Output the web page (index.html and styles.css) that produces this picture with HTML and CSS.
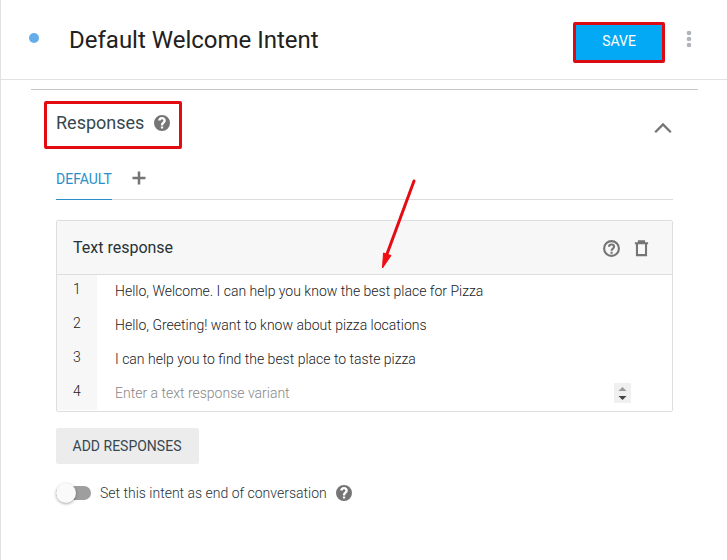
FILE: index.html
```html
<!DOCTYPE html>
<html lang="en">
<head>
<meta charset="utf-8">
<title>Default Welcome Intent</title>
<link rel="stylesheet" href="styles.css">
</head>
<body>
<svg class="symbols" aria-hidden="true">
  <symbol id="help" viewBox="2 2 20 20"><path d="M12 2a10 10 0 1 0 0 20 10 10 0 0 0 0-20zm1.500 17h-2.900v-2.700h2.900zm2.400-7.700-.9.900c-.9.800-1.400 1.400-1.500 2.800h-2.900c0-2 .7-3.100 1.700-4l1.100-1.200c.8-1 .3-2.500-1.400-2.500-1 0-1.600.7-1.600 1.700H7.300c0-2.700 2-4.500 4.700-4.500s4.700 1.700 4.700 4.200c0 1.100-.3 2-.8 2.600z"/></symbol>
</svg>
<div class="page">
  <header class="header">
    <span class="status"></span>
    <h1 class="title">Default Welcome Intent</h1>
    <button class="save">SAVE</button>
    <svg class="more" viewBox="0 0 6 18"><circle cx="3" cy="3" r="2.300"/><circle cx="3" cy="9" r="2.300"/><circle cx="3" cy="15" r="2.300"/></svg>
  </header>
  <main class="content">
    <div class="section-head">
      <div class="section-title"><span>Responses</span><svg class="help"><use href="#help"/></svg></div>
      <svg class="chevron" viewBox="0 0 18 12"><path d="M1.200 10.200 9 2.400l7.800 7.800"/></svg>
    </div>
    <nav class="tabs">
      <a class="tab">DEFAULT</a>
      <svg class="plus" viewBox="0 0 14 14"><path d="M7 .5v13M.5 7h13"/></svg>
    </nav>
    <section class="card">
      <div class="card-head">
        <h2 class="card-title">Text response</h2>
        <svg class="help-outline" viewBox="2 2 20 20"><circle cx="12" cy="12" r="8.700"/><path d="M9.100 10c0-3.700 5.900-3.700 5.900 0 0 2.100-2.900 2.200-2.900 4.600M12.100 15.900v2.400"/></svg>
        <svg class="trash" viewBox="0 0 14 18"><path d="M0 3.500h14M4.300 3V1.300h5.400V3M2.200 4v12h9.600V4"/></svg>
      </div>
      <ol class="rows">
        <li class="row"><span class="num">1</span><span class="text">Hello, Welcome. I can help you know the best place for Pizza</span></li>
        <li class="row"><span class="num">2</span><span class="text">Hello, Greeting! want to know about pizza locations</span></li>
        <li class="row"><span class="num">3</span><span class="text">I can help you to find the best place to taste pizza</span></li>
        <li class="row"><span class="num">4</span><span class="text placeholder">Enter a text response variant</span>
          <svg class="stepper" viewBox="0 0 17 20"><path class="up" d="M4.500 8 8.500 4l4 4z"/><path class="down" d="M4.500 13h8l-4 4z"/></svg></li>
      </ol>
    </section>
    <button class="add">ADD RESPONSES</button>
    <div class="end">
      <span class="switch"><span class="knob"></span></span>
      <span class="end-label">Set this intent as end of conversation</span>
      <svg class="help"><use href="#help"/></svg>
    </div>
  </main>
  <svg class="arrow" viewBox="0 0 40 94"><path class="shaft" d="M34 4 7 77"/><path class="head" d="M2.500 91 3.500 76l7.500 2.500z"/></svg>
</div>
</body>
</html>
```
FILE: styles.css
```css
* { box-sizing: border-box; }
body { margin: 0; background: #fff; font-family: Roboto, sans-serif; color: #37474f; }
svg { display: block; flex: none; }
h1, h2, ol { margin: 0; padding: 0; font-weight: 400; list-style: none; }
button { border: 0; padding: 0; font: inherit; }
span { white-space: nowrap; }
.symbols { position: absolute; width: 0; height: 0; }
.page { position: relative; height: 560px; overflow: hidden; border-left: 1px solid #e2e2e2; }
.header { height: 80px; border-bottom: 1px solid #e2e2e2; display: flex; align-items: center; padding: 0 35px 0 28px; }
.status { width: 10px; height: 10px; border-radius: 50%; background: #64ade8; margin: 0 30px 3px 0; }
.title { flex: 1; font-size: 24px; line-height: 28px; color: #212121; }
.save { width: 92px; height: 41px; margin: 5px 21px 0 0; border: 3px solid #dc0b12; border-radius: 2px; background: #03a9f4; color: #fff; font-size: 14px; line-height: 16px; padding-bottom: 2px; }
.more { width: 6px; height: 18px; fill: #b0b3b8; margin-bottom: 1px; }
.content { margin: 9px 29px 0 30px; border-top: 1px solid #c4c4c4; padding: 11px 25px 0; }
.section-head { display: flex; justify-content: space-between; margin-left: -12px; height: 48px; }
.section-title { width: 138px; border: 3px solid #e20b12; border-radius: 2px; display: flex; align-items: center; padding: 0 9px 5px; font-size: 18px; line-height: 22px; gap: 10px; }
.help { width: 16px; height: 16px; fill: #757575; }
.chevron { width: 18px; height: 12px; margin: 21px 1px 0 0; fill: none; stroke: #757575; stroke-width: 2.300; }
.tabs { height: 51px; display: flex; border-bottom: 1px solid #dcdcdc; }
.tab { width: 56px; height: 51px; padding-top: 22px; font-size: 14px; line-height: 16px; color: #2a8fc7; border-bottom: 1px solid #2a8fc7; }
.plus { width: 14px; height: 14px; margin: 22px 0 0 20px; fill: none; stroke: #757575; stroke-width: 2.500; }
.card { margin-top: 20px; height: 192px; border: 1px solid #dcdfdf; border-radius: 2px; }
.card-head { height: 54px; background: #f7f7f7; border-bottom: 1px solid #dcdfdf; display: flex; align-items: center; padding: 0 23px 0 16px; }
.card-title { flex: 1; font-size: 16px; line-height: 20px; color: #263238; }
.help-outline { width: 17px; height: 17px; margin: 1px 14px 0 0; fill: none; stroke: #757575; stroke-width: 2.500; }
.trash { width: 15px; height: 17px; margin-top: 2px; fill: none; stroke: #757575; stroke-width: 2.200; }
.row { display: flex; height: 34px; font-size: 14px; line-height: 32px; }
.row:last-child { height: 33px; }
.num { width: 40px; background: #f7f7f7; padding-left: 16px; line-height: 29px; font-weight: 300; color: #202124; }
.text { flex: 1; padding-left: 18px; font-weight: 300; color: #202124; }
.placeholder { color: #888; }
.stepper { width: 17px; height: 20px; margin: 6px 41px 0 0; background: #f0f0f0; }
.up { fill: #9a9a9a; }
.down { fill: #444; }
.add { display: block; margin-top: 16px; width: 143px; height: 36px; padding: 0 1px 1px 0; background: #ececec; border-radius: 2px; font-size: 14px; line-height: 16px; color: #37474f; }
.end { display: flex; align-items: center; height: 20px; margin-top: 19px; }
.switch { position: relative; width: 35px; height: 14px; border-radius: 7px; background: #9e9e9e; }
.knob { position: absolute; left: 0; top: -3px; width: 20px; height: 20px; border-radius: 50%; background: #fafafa; box-shadow: 0 1px 3px rgba(0,0,0,.35); }
.end-label { width: 227px; margin: 0 9px; padding-bottom: 1px; font-size: 14px; line-height: 18px; font-weight: 300; color: #263238; }
.end .help { margin-bottom: 1px; }
.arrow { position: absolute; left: 379px; top: 177px; width: 40px; height: 94px; }
.shaft { stroke: #e30c12; stroke-width: 3; stroke-linecap: round; }
.head { fill: #f00c10; stroke: #f00c10; }
```
